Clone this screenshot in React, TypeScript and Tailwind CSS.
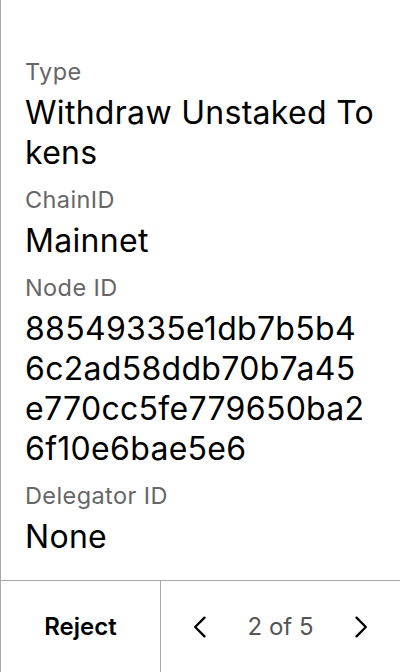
import React from 'react';

interface FieldProps {
  label: string;
  lines: string[];
}

// lines are kept as shown on the device, which breaks long values mid-word
const Field: React.FC<FieldProps> = ({ label, lines }) => (
  <div className="flex flex-col">
    <span className="text-[23.5px] leading-[28px] tracking-[0.4px] text-[#666666]">{label}</span>
    <div className="mt-[7px] mb-[13px] text-[32px] leading-[40px] tracking-[0.3px] text-black">
      {lines.map((l, i) => (
        <div key={i} className="whitespace-nowrap">{l}</div>
      ))}
    </div>
  </div>
);

const Chevron: React.FC<{ dir: 'left' | 'right' }> = ({ dir }) => (
  <svg width="28" height="28" viewBox="0 0 24 24" fill="none" stroke="currentColor" strokeWidth="2" strokeLinecap="round" strokeLinejoin="round">
    {dir === 'left' ? <path d="M15 4l-8 8 8 8" /> : <path d="M9 4l8 8-8 8" />}
  </svg>
);

export default function App() {
  const fields: FieldProps[] = [
    { label: 'Type', lines: ['Withdraw Unstaked To', 'kens'] },
    { label: 'ChainID', lines: ['Mainnet'] },
    { label: 'Node ID', lines: ['88549335e1db7b5b4', '6c2ad58ddb70b7a45', 'e770cc5fe779650ba2', '6f10e6bae5e6'] },
    { label: 'Delegator ID', lines: ['None'] },
  ];

  return (
    <div className="w-[400px] h-[672px] bg-white flex flex-col border-l border-[#a8a8a8] font-['Inter',sans-serif]">
      <div className="flex-1 pl-6 pr-6 pt-[58px] overflow-hidden">
        {fields.map(f => (
          <Field key={f.label} {...f} />
        ))}
      </div>
      <div className="h-[92px] border-t border-[#a8a8a8] flex">
        <button className="w-[160px] border-r border-[#a8a8a8] flex items-center justify-center text-[24px] font-semibold text-black">
          Reject
        </button>
        <div className="flex-1 flex items-center justify-between px-[26px]">
          <span className="text-black"><Chevron dir="left" /></span>
          <span className="text-[24px] text-[#555555]">2 of 5</span>
          <span className="text-black"><Chevron dir="right" /></span>
        </div>
      </div>
    </div>
  );
}
